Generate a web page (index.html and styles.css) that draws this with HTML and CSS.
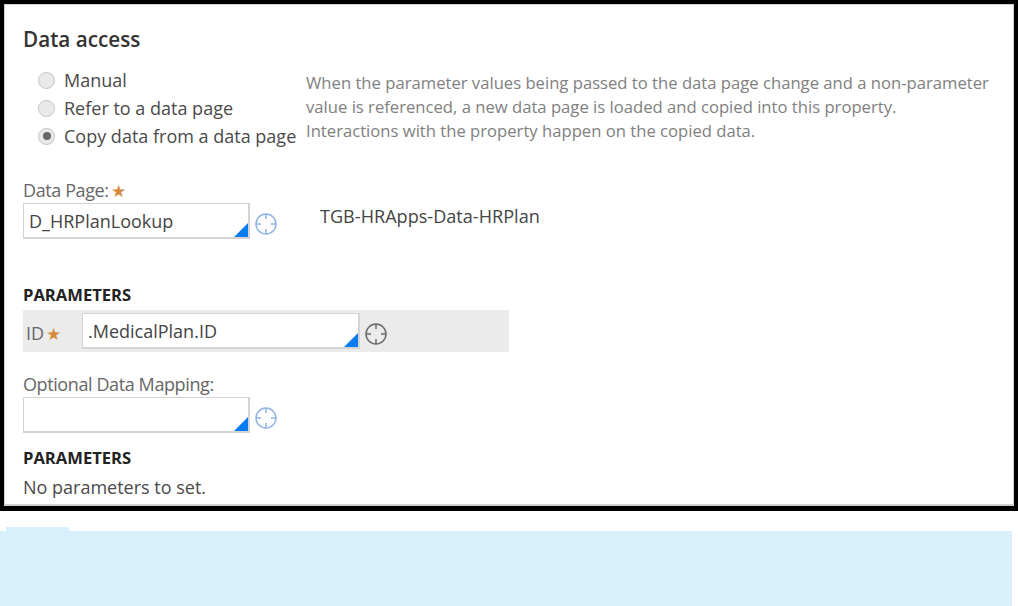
FILE: index.html
```html
<!DOCTYPE html>
<html lang="en">
<head>
<meta charset="utf-8">
<title>Data access</title>
<link rel="stylesheet" href="styles.css">
</head>
<body>
<main class="frame">
  <div class="panel">
    <h1 class="title">Data access</h1>
    <div class="access">
      <div class="radios">
        <div class="radio-row"><span class="radio"></span><span>Manual</span></div>
        <div class="radio-row"><span class="radio"></span><span>Refer to a data page</span></div>
        <div class="radio-row"><span class="radio checked"></span><span>Copy data from a data page</span></div>
      </div>
      <p class="help">When the parameter values being passed to the data page change and a non-parameter value is referenced, a new data page is loaded and copied into this property. Interactions with the property happen on the copied data.</p>
    </div>

    <div class="label label-page">Data Page:<span class="star">★</span></div>
    <div class="field-row">
      <div class="input"><span>D_HRPlanLookup</span></div>
      <svg class="target blue" viewBox="0 0 22 22"><circle cx="11" cy="11" r="10"/><path d="M11 1v5M11 16v5M1 11h5M16 11h5"/></svg>
      <span class="class-name">TGB-HRApps-Data-HRPlan</span>
    </div>

    <h2 class="section section-first">PARAMETERS</h2>
    <div class="param">
      <span class="param-label">ID<span class="star">★</span></span>
      <div class="input input-param"><span>.MedicalPlan.ID</span></div>
      <svg class="target grey" viewBox="0 0 22 22"><circle cx="11" cy="11" r="10"/><path d="M11 1v5M11 16v5M1 11h5M16 11h5"/></svg>
    </div>

    <div class="label label-map">Optional Data Mapping:</div>
    <div class="field-row">
      <div class="input"></div>
      <svg class="target blue" viewBox="0 0 22 22"><circle cx="11" cy="11" r="10"/><path d="M11 1v5M11 16v5M1 11h5M16 11h5"/></svg>
    </div>

    <h2 class="section section-second">PARAMETERS</h2>
    <p class="none">No parameters to set.</p>
  </div>
</main>
<div class="tab"></div>
<div class="band"></div>
</body>
</html>
```
FILE: styles.css
```css
* { box-sizing: border-box; }
html, body { margin: 0; padding: 0; background: #fff; }
body {
  width: 1018px;
  height: 606px;
  overflow: hidden;
  font-family: "Open Sans", "Liberation Sans", sans-serif;
  color: #4a4a4a;
  font-size: 18px;
}
.frame {
  height: 511px;
  border: solid #000;
  border-width: 4px 4px 5px 4px;
}
.panel {
  height: 100%;
  border: solid #cfcfcf;
  border-width: 1px 1px 2px 1px;
  padding: 0 0 0 18px;
  overflow: hidden;
}
.title {
  margin: 0;
  padding-top: 20px;
  font-size: 20.7px;
  line-height: 28px;
  font-weight: 600;
  color: #333;
}
.access { display: flex; margin-top: 13px; padding-left: 15px; }
.radios { width: 268px; flex: none; }
.radio-row { display: flex; align-items: center; gap: 9px; height: 28px; white-space: nowrap; }
.radio {
  width: 17px;
  height: 17px;
  flex: none;
  border-radius: 50%;
  border: 1.5px solid #c4c4c4;
  background: #e9e9e9;
  display: flex;
  align-items: center;
  justify-content: center;
}
.radio.checked::after {
  content: "";
  width: 8px;
  height: 8px;
  border-radius: 50%;
  background: #666;
}
.help {
  margin: 5px 0 0;
  width: 685px;
  font-size: 16.65px;
  line-height: 24px;
  color: #808080;
}
.label { font-size: 18px; line-height: 22px; color: #666; letter-spacing: -0.4px; }
.label-page { margin-top: 29px; }
.label-map { margin-top: 21px; }
.star { color: #d58a3c; margin-left: 2px; font-size: 17px; letter-spacing: 0; }
.field-row { display: flex; align-items: center; gap: 5px; margin-top: 1px; }
.label-map + .field-row { margin-top: 2px; }
.input {
  position: relative;
  width: 227px;
  height: 36px;
  flex: none;
  background: #fff;
  border: solid #d4d4d4;
  border-width: 1px 2px 2px 1px;
  padding-left: 5px;
  display: flex;
  align-items: center;
  color: #444;
  white-space: nowrap;
}
.input::after {
  content: "";
  position: absolute;
  right: 0;
  bottom: 0;
  border-style: solid;
  border-width: 0 0 14px 14px;
  border-color: transparent transparent #0a7cf0 transparent;
}
.target { width: 22px; height: 22px; flex: none; fill: none; stroke-width: 1.5; margin-top: 5px; }
.target.blue { stroke: #8fb4e8; }
.target.grey { stroke: #6a6a6a; margin-left: -1px; }
.class-name { margin-left: 38px; margin-top: -11px; font-size: 18.1px; color: #444; white-space: nowrap; }
.section { margin: 0; font-size: 16.6px; line-height: 20px; font-weight: 700; color: #222; }
.section-first { margin-top: 46px; }
.section-second { margin-top: 15px; }
.param {
  display: flex;
  align-items: center;
  width: 486px;
  height: 42px;
  margin-top: 5px;
  padding-left: 3px;
  gap: 6px;
  background: #ebebeb;
}
.param-label { width: 50px; flex: none; padding-top: 4px; color: #666; }
.input-param { width: 278px; }
.none { margin: 8px 0 0; line-height: 22px; color: #4a4a4a; }
.tab { width: 63px; height: 4px; margin: 16px 0 0 6px; background: #d8effc; }
.band { width: 1012px; height: 75px; background: #d8effc; }
```
